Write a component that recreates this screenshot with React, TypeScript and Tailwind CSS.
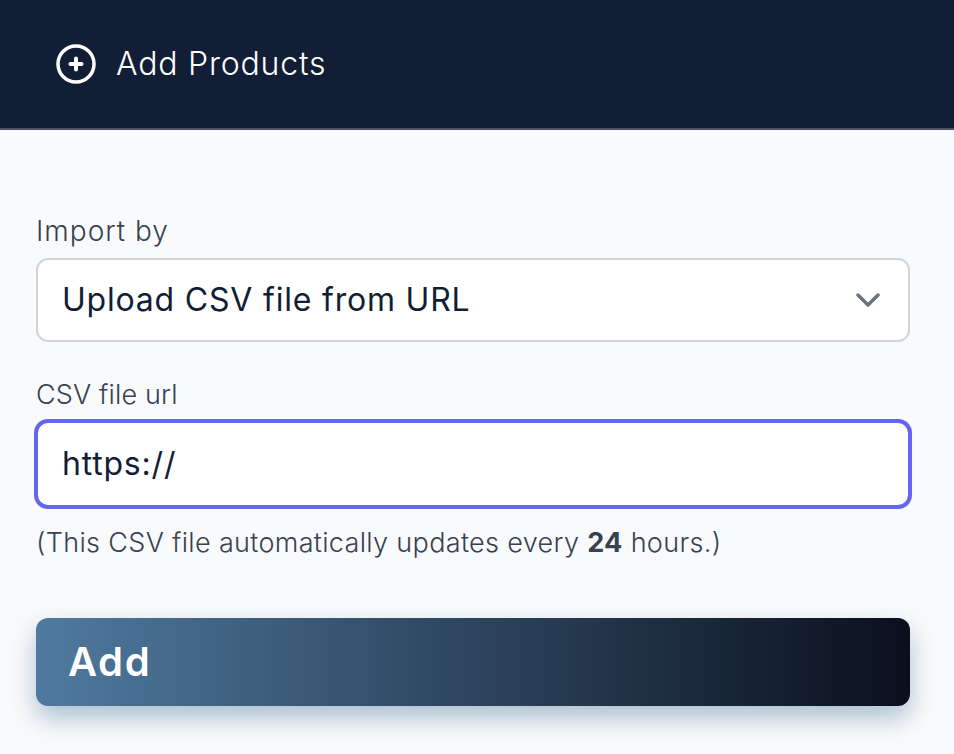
export default function App() {
  return (
    <div className="min-h-[754px] w-full bg-[#f9fafb] font-['Inter',sans-serif] text-[#374151]">
      <div className="flex h-[130px] items-center gap-5 border-b-2 border-[#4b5563] bg-[#111e36] pl-14 text-white">
        <svg width="40" height="40" viewBox="0 0 40 40" fill="none" stroke="currentColor" strokeWidth="3.5" strokeLinecap="round">
          <circle cx="20" cy="20" r="18" />
          <path d="M20 14.5v11M14.5 20h11" strokeWidth="4" />
        </svg>
        <span className="text-[32px] font-light tracking-[0.8px]">Add Products</span>
      </div>
      <div className="pl-9 pr-11 pt-[83px]">
        <label className="block text-[28px] leading-[36px] font-light tracking-[1px]">Import by</label>
        <div className="mt-[9px] flex h-[84px] items-center justify-between rounded-xl border-2 border-[#d1d5db] bg-white pl-6 pr-[28px] text-[32px] tracking-[0.8px] text-[#111e36]">
          <span>Upload CSV file from URL</span>
          <svg width="24" height="16" viewBox="0 0 24 16" fill="none" stroke="#6b7280" strokeWidth="3.5" strokeLinecap="round" strokeLinejoin="round">
            <path d="M2 3l10 10L22 3" />
          </svg>
        </div>
        <label className="mt-[35px] block text-[27px] leading-[36px] font-light tracking-[0.15px]">CSV file url</label>
        <div className="mt-[8px] flex h-[86px] items-center rounded-xl border-2 border-[#6366f1] bg-white pl-[24px] text-[32px] tracking-[0.8px] text-[#111e36] ring-2 ring-[#6366f1]">
          https://
        </div>
        <p className="mt-[19px] text-[27px] leading-[34px] font-light tracking-[0.33px]">(This CSV file automatically updates every <b className="font-bold">24</b> hours.)</p>
        <button className="mt-[58px] flex h-[88px] w-full items-center rounded-xl bg-linear-to-r/srgb from-[#4f7a9f] to-[#0a0f1c] pl-8 text-[40px] font-semibold tracking-[1.6px] text-white shadow-[0_12px_24px_rgba(79,122,159,0.45)]">
          Add
        </button>
      </div>
    </div>
  )
}
